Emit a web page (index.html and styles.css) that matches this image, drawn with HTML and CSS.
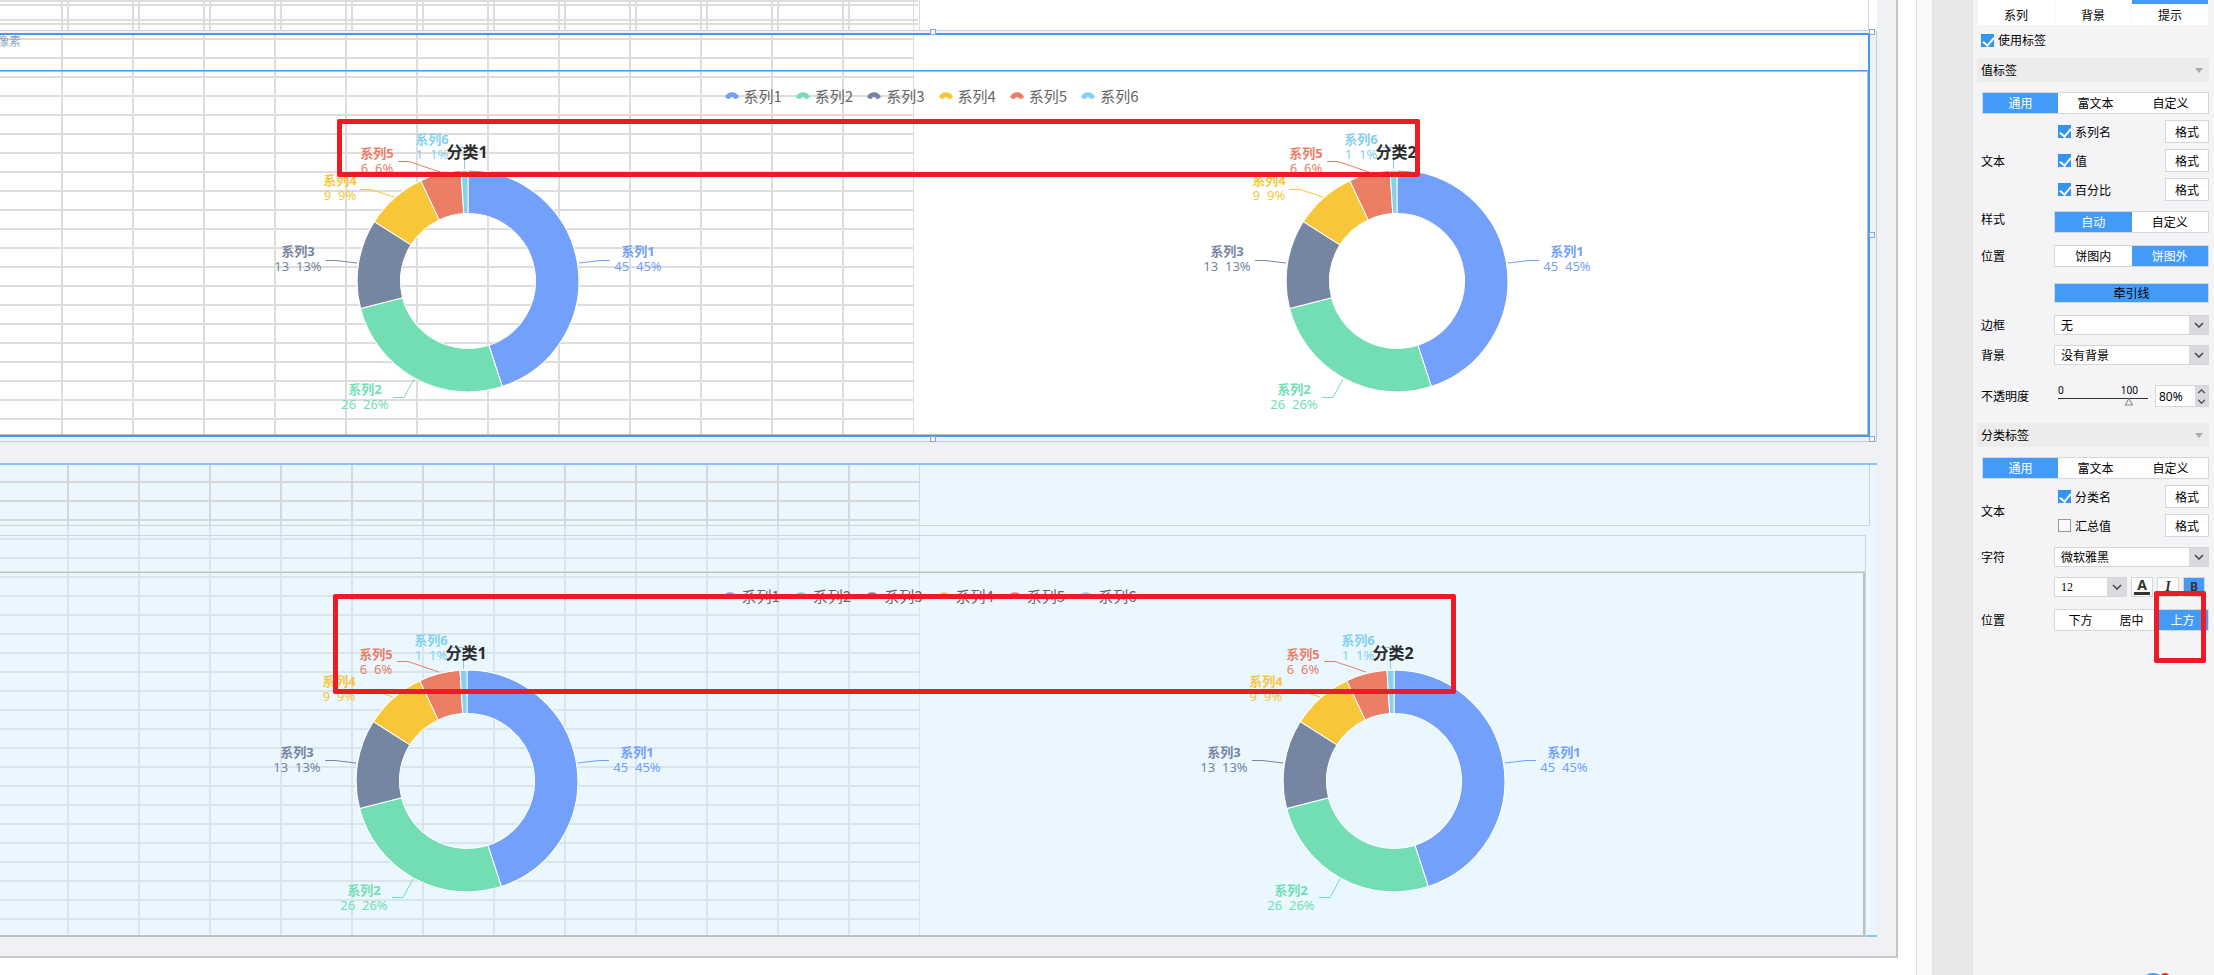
FILE: index.html
```html
<!DOCTYPE html>
<html lang="zh-CN">
<head>
<meta charset="utf-8">
<title>图表设计器</title>
<link rel="stylesheet" href="styles.css">
</head>
<body>
<svg class="defs" aria-hidden="true">
  <symbol id="donut" viewBox="-210 -160 420 300" overflow="visible">
    <g stroke="#fff" stroke-width="1" stroke-linejoin="round" transform="scale(1.008)">
      <path fill="#73a0fa" d="M0-110A110 110 0 0 1 33.99 104.62L20.7 63.72A67 67 0 0 0 0-67Z"/>
      <path fill="#73deb3" d="M33.99 104.62A110 110 0 0 1-106.54 27.36L-64.9 16.66A67 67 0 0 0 20.7 63.72Z"/>
      <path fill="#7585a2" d="M-106.54 27.36A110 110 0 0 1-92.88-58.94L-56.57-35.9A67 67 0 0 0-64.9 16.66Z"/>
      <path fill="#f7c739" d="M-92.88-58.94A110 110 0 0 1-46.84-99.53L-28.53-60.62A67 67 0 0 0-56.57-35.9Z"/>
      <path fill="#eb7e65" d="M-46.84-99.53A110 110 0 0 1-6.91-109.78L-4.21-66.87A67 67 0 0 0-28.53-60.62Z"/>
      <path fill="#83d0ef" d="M-6.91-109.78A110 110 0 0 1 0-110L0-67A67 67 0 0 0-4.21-66.87Z"/>
    </g>
    <g fill="none" stroke-width="1">
      <path stroke="#73a0fa" d="M111-18L132-20.5H142"/>
      <path stroke="#73deb3" d="M-54 98L-64 116.500H-75"/>
      <path stroke="#7585a2" d="M-111-18L-132-20.500H-142"/>
      <path stroke="#f7c739" d="M-74-84L-97-91.500H-108"/>
      <path stroke="#eb7e65" d="M-28-109L-59-119.500H-70"/>
      <path stroke="#83d0ef" d="M-3.500-112V-133.500H-14"/>
    </g>
  </symbol>
  <symbol id="arc" viewBox="0 0 14 8"><path fill="currentColor" d="M0 5C2-1.500 12-1.500 14 5Q12 7.500 9.500 7L8.500 5.500Q7 4.500 5.500 5.500L4.500 7Q2 7.500 0 5Z"/></symbol>
  <symbol id="chev" viewBox="0 0 10 6"><path d="M1 1L5 5L9 1" fill="none" stroke="#444" stroke-width="1.500"/></symbol>
</svg>

<div class="app">
  <main class="workspace">
    <div class="board">
      <section class="strip"></section>

      <section class="selection">
        <article class="chart-card selected">
          <header class="card-title">像素</header>
          <div class="card-body">
            <ul class="legend">
              <li class="s1"><svg><use href="#arc"/></svg><span>系列1</span></li>
              <li class="s2"><svg><use href="#arc"/></svg><span>系列2</span></li>
              <li class="s3"><svg><use href="#arc"/></svg><span>系列3</span></li>
              <li class="s4"><svg><use href="#arc"/></svg><span>系列4</span></li>
              <li class="s5"><svg><use href="#arc"/></svg><span>系列5</span></li>
              <li class="s6"><svg><use href="#arc"/></svg><span>系列6</span></li>
            </ul>
            <div class="pies">
              <svg class="pie" viewBox="-210 -160 420 300">
                <use href="#donut" x="-210" y="-160" width="420" height="300"/>
                <g class="s1"><text class="name" x="170" y="-25">系列1</text><text x="170" y="-10">45&#160;&#160;45%</text></g>
                <g class="s2"><text class="name" x="-103" y="113">系列2</text><text x="-103" y="128">26&#160;&#160;26%</text></g>
                <g class="s3"><text class="name" x="-170" y="-25">系列3</text><text x="-170" y="-10">13&#160;&#160;13%</text></g>
                <g class="s4"><text class="name" x="-128" y="-96">系列4</text><text x="-128" y="-81">9&#160;&#160;9%</text></g>
                <g class="s5"><text class="name" x="-91" y="-123">系列5</text><text x="-91" y="-108">6&#160;&#160;6%</text></g>
                <g class="s6"><text class="name" x="-36" y="-137">系列6</text><text x="-36" y="-122">1&#160;&#160;1%</text></g>
                <text class="category" x="-1" y="-123">分类1</text>
              </svg>
              <svg class="pie" viewBox="-210 -160 420 300">
                <use href="#donut" x="-210" y="-160" width="420" height="300"/>
                <g class="s1"><text class="name" x="170" y="-25">系列1</text><text x="170" y="-10">45&#160;&#160;45%</text></g>
                <g class="s2"><text class="name" x="-103" y="113">系列2</text><text x="-103" y="128">26&#160;&#160;26%</text></g>
                <g class="s3"><text class="name" x="-170" y="-25">系列3</text><text x="-170" y="-10">13&#160;&#160;13%</text></g>
                <g class="s4"><text class="name" x="-128" y="-96">系列4</text><text x="-128" y="-81">9&#160;&#160;9%</text></g>
                <g class="s5"><text class="name" x="-91" y="-123">系列5</text><text x="-91" y="-108">6&#160;&#160;6%</text></g>
                <g class="s6"><text class="name" x="-36" y="-137">系列6</text><text x="-36" y="-122">1&#160;&#160;1%</text></g>
                <text class="category" x="-1" y="-123">分类2</text>
              </svg>
            </div>
          </div>
        </article>
        <i class="handle top mid"></i><i class="handle top end"></i>
        <i class="handle center end"></i>
        <i class="handle bottom mid"></i><i class="handle bottom end"></i>
      </section>

      <section class="block">
        <div class="block-head"></div>
        <article class="chart-card plain">
          <header class="card-title"></header>
          <div class="card-body">
            <ul class="legend">
              <li class="s1"><svg><use href="#arc"/></svg><span>系列1</span></li>
              <li class="s2"><svg><use href="#arc"/></svg><span>系列2</span></li>
              <li class="s3"><svg><use href="#arc"/></svg><span>系列3</span></li>
              <li class="s4"><svg><use href="#arc"/></svg><span>系列4</span></li>
              <li class="s5"><svg><use href="#arc"/></svg><span>系列5</span></li>
              <li class="s6"><svg><use href="#arc"/></svg><span>系列6</span></li>
            </ul>
            <div class="pies">
              <svg class="pie" viewBox="-210 -160 420 300">
                <use href="#donut" x="-210" y="-160" width="420" height="300"/>
                <g class="s1"><text class="name" x="170" y="-24">系列1</text><text x="170" y="-9">45&#160;&#160;45%</text></g>
                <g class="s2"><text class="name" x="-103" y="114">系列2</text><text x="-103" y="129">26&#160;&#160;26%</text></g>
                <g class="s3"><text class="name" x="-170" y="-24">系列3</text><text x="-170" y="-9">13&#160;&#160;13%</text></g>
                <g class="s4"><text class="name" x="-128" y="-95">系列4</text><text x="-128" y="-80">9&#160;&#160;9%</text></g>
                <g class="s5"><text class="name" x="-91" y="-122">系列5</text><text x="-91" y="-107">6&#160;&#160;6%</text></g>
                <g class="s6"><text class="name" x="-36" y="-136">系列6</text><text x="-36" y="-121">1&#160;&#160;1%</text></g>
                <text class="category" x="-1" y="-122">分类1</text>
              </svg>
              <svg class="pie" viewBox="-210 -160 420 300">
                <use href="#donut" x="-210" y="-160" width="420" height="300"/>
                <g class="s1"><text class="name" x="170" y="-24">系列1</text><text x="170" y="-9">45&#160;&#160;45%</text></g>
                <g class="s2"><text class="name" x="-103" y="114">系列2</text><text x="-103" y="129">26&#160;&#160;26%</text></g>
                <g class="s3"><text class="name" x="-170" y="-24">系列3</text><text x="-170" y="-9">13&#160;&#160;13%</text></g>
                <g class="s4"><text class="name" x="-128" y="-95">系列4</text><text x="-128" y="-80">9&#160;&#160;9%</text></g>
                <g class="s5"><text class="name" x="-91" y="-122">系列5</text><text x="-91" y="-107">6&#160;&#160;6%</text></g>
                <g class="s6"><text class="name" x="-36" y="-136">系列6</text><text x="-36" y="-121">1&#160;&#160;1%</text></g>
                <text class="category" x="-1" y="-122">分类2</text>
              </svg>
            </div>
          </div>
        </article>
      </section>
    </div>
    <div class="mark mark-upper"></div>
    <div class="mark mark-lower"></div>
  </main>

  <div class="ruler"></div>
  <div class="gutter"></div>

  <aside class="panel">
    <nav class="tabs">
      <button type="button">系列</button><button type="button">背景</button><button type="button" class="active">提示</button>
    </nav>
    <label class="check use-label"><input type="checkbox" checked><span>使用标签</span></label>

    <h2 class="section">值标签</h2>
    <div class="seg wide"><button type="button" class="on">通用</button><button type="button">富文本</button><button type="button">自定义</button></div>
    <div class="row texts">
      <span class="lab">文本</span>
      <div class="lines">
        <div class="line"><label class="check"><input type="checkbox" checked><span>系列名</span></label><button type="button" class="btn">格式</button></div>
        <div class="line"><label class="check"><input type="checkbox" checked><span>值</span></label><button type="button" class="btn">格式</button></div>
        <div class="line"><label class="check"><input type="checkbox" checked><span>百分比</span></label><button type="button" class="btn">格式</button></div>
      </div>
    </div>
    <div class="row gap-s raised"><span class="lab">样式</span><div class="seg"><button type="button" class="on">自动</button><button type="button">自定义</button></div></div>
    <div class="row gap-m"><span class="lab">位置</span><div class="seg"><button type="button">饼图内</button><button type="button" class="on">饼图外</button></div></div>
    <div class="row gap-l"><span class="lab"></span><button type="button" class="lead">牵引线</button></div>
    <div class="row gap-m"><label class="lab" for="frame">边框</label><div class="select"><select id="frame"><option>无</option></select><svg><use href="#chev"/></svg></div></div>
    <div class="row gap-s"><label class="lab" for="back">背景</label><div class="select"><select id="back"><option>没有背景</option></select><svg><use href="#chev"/></svg></div></div>
    <div class="row gap-x">
      <label class="lab" for="alpha">不透明度</label>
      <div class="slider"><div class="scale"><span>0</span><span>100</span></div><input id="alpha" type="range" min="0" max="100" value="82"></div>
      <div class="spin">
        <input type="text" value="80%" aria-label="不透明度数值">
        <div class="steps">
          <button type="button" aria-label="增加"><svg class="up"><use href="#chev"/></svg></button>
          <button type="button" aria-label="减少"><svg><use href="#chev"/></svg></button>
        </div>
      </div>
    </div>

    <h2 class="section second">分类标签</h2>
    <div class="seg wide"><button type="button" class="on">通用</button><button type="button">富文本</button><button type="button">自定义</button></div>
    <div class="row texts">
      <span class="lab">文本</span>
      <div class="lines">
        <div class="line"><label class="check"><input type="checkbox" checked><span>分类名</span></label><button type="button" class="btn">格式</button></div>
        <div class="line"><label class="check"><input type="checkbox"><span>汇总值</span></label><button type="button" class="btn">格式</button></div>
      </div>
    </div>
    <div class="row gap-s"><label class="lab" for="font">字符</label><div class="select"><select id="font"><option>微软雅黑</option></select><svg><use href="#chev"/></svg></div></div>
    <div class="row gap-s">
      <span class="lab"></span>
      <div class="fonts">
        <div class="select size"><select aria-label="字号"><option>12</option></select><svg><use href="#chev"/></svg></div>
        <button type="button" class="fmt color">A</button>
        <button type="button" class="fmt italic">I</button>
        <button type="button" class="fmt bold">B</button>
      </div>
    </div>
    <div class="row gap-m"><span class="lab">位置</span><div class="seg"><button type="button">下方</button><button type="button">居中</button><button type="button" class="on">上方</button></div></div>
    <div class="mark mark-position"></div>
    <svg class="badge" viewBox="0 0 40 30"><circle cx="16" cy="14" r="13" fill="#4a9df5"/><circle cx="28" cy="6" r="5" fill="#e8312f"/></svg>
  </aside>
</div>
</body>
</html>
```

FILE: styles.css
```css
* { box-sizing: border-box; }

body {
  margin: 0;
  overflow: hidden;
  background: #fff;
  color: #000;
  font: 12px/16px "Noto Sans CJK SC", sans-serif;
}

button, input, select { margin: 0; padding: 0; font: inherit; color: inherit; border-radius: 0; }
.defs { position: absolute; width: 0; height: 0; }
.app { display: flex; min-height: 100vh; }
.workspace { position: relative; flex: 1; min-width: 0; }

/* canvas */
.board {
  margin-right: 18px;
  padding-bottom: 19px;
  background: #f0f1f5;
  border-right: 2px solid #c3c3c3;
  border-bottom: 2px solid #c8cacc;
}

.strip {
  height: 31px;
  margin-right: 27px;
  border-right: 1px solid #cfd0d1;
  border-bottom: 1px solid #cfd3d8;
  box-shadow: 8px 0 #fff;
  background:
    repeating-linear-gradient(90deg, #0000 0 61px, #ddd 61px 63px, #0000 63px 71px) 0 0 / 914px 100% no-repeat,
    repeating-linear-gradient(90deg, #0000 0 67px, #ddd 67px 69px, #0000 69px 71px) 0 0 / 920px 100% no-repeat,
    linear-gradient(#ddd 0 2px, #0000 2px 4px, #ddd 4px 6px, #0000 6px 19px, #ddd 19px 21px, #0000 21px 23px, #ddd 23px 25px, #0000 25px) 0 0 / 918px 100% no-repeat,
    #fff;
}

.selection {
  position: relative;
  margin-right: 19px;
  padding: 2px 6px 4px 0;
  border-right: 1px solid #c9ccd0;
  border-bottom: 1px solid #c9ccd0;
  background: #eef3fa;
}

.chart-card.selected {
  border: 2px solid #439af8;
  border-left: 0;
  background:
    repeating-linear-gradient(90deg, #0000 0 61px, #ddd 61px 63px, #0000 63px 71px) 0 0 / 914px 100% no-repeat,
    repeating-linear-gradient(#0000 0 3px, #ddd 3px 5px, #0000 5px 19px) 0 0 / 914px 100% no-repeat,
    #fff;
}
.selected .card-title {
  height: 36px;
  border-bottom: 1px solid #439af8;
  color: #8ba9c5;
  line-height: 12px;
  text-indent: -3px;
}
.selected .card-body { height: 364px; padding: 13px 0 0; border: 1px solid #bdbdbd; border-left: 0; }

.handle { position: absolute; width: 6px; height: 6px; border: 1px solid #86a9c8; background: #f4f9fe; }
.handle.top { top: -2px; }
.handle.center { top: calc(50% - 4px); }
.handle.bottom { bottom: -1px; }
.handle.mid { left: calc(50% - 8px); }
.handle.end { right: 1px; }

.block {
  margin: 21px 19px 0 0;
  border-top: 2px solid #8cc1fb;
  border-bottom: 2px solid #8cc1fb;
  background:
    repeating-linear-gradient(90deg, #0000 0 67px, #d9e5eb 67px 69px, #0000 69px 71px) 0 0 / 920px 100% no-repeat,
    repeating-linear-gradient(#0000 0 16px, #d9e5eb 16px 18px, #0000 18px 19px) 0 0 / 920px 100% no-repeat,
    #eaf7fe;
}
.block-head {
  height: 61px;
  margin-right: 7px;
  border-right: 1px solid #cdd3d6;
  border-bottom: 1px solid #cdd3d6;
  background:
    repeating-linear-gradient(90deg, #0000 0 67px, #d5d7da 67px 69px, #0000 69px 71px) 0 0 / 920px 100% no-repeat,
    repeating-linear-gradient(#0000 0 16px, #d5d7da 16px 18px, #0000 18px 19px) 0 0 / 920px 100% no-repeat;
}
.chart-card.plain { margin: 9px 11px -2px 0; border-top: 1px solid #cdd3d6; border-right: 1px solid #cdd3d6; }
.plain .card-title { height: 36px; border-bottom: 1px solid #d5dde1; }
.plain .card-body { height: 365px; padding: 12px 0 0; border: 2px solid #bcc1c3; border-width: 1px 2px 2px 0; }

.legend { display: flex; justify-content: center; gap: 14px; margin: 0; padding: 0 4px 0 0; list-style: none; }
.legend li { display: flex; align-items: center; gap: 5px; }
.legend svg { width: 14px; height: 8px; }
.legend span { color: #666; font: 15px/22px "Noto Sans CJK SC", sans-serif; }

.pies { display: grid; grid-template-columns: 1fr 1fr; justify-items: center; margin-top: 14px; padding: 0 6px 0 3px; }
.pie { width: 420px; height: 300px; overflow: visible; }
.pie text { fill: currentColor; font: 13px "Noto Sans", "Noto Sans CJK SC", sans-serif; text-anchor: middle; }
.pie .name { font-weight: 700; }
.pie .category { color: #2b2b2b; font-size: 16px; font-weight: 700; }

.s1 { color: #73a0fa; }
.s2 { color: #73deb3; }
.s3 { color: #7585a2; }
.s4 { color: #f7c739; }
.s5 { color: #eb7e65; }
.s6 { color: #83d0ef; }

/* review marks drawn over the canvas */
.mark { position: absolute; border: 5px solid #ed1c24; border-radius: 2px; pointer-events: none; }
.mark-upper { left: 337px; top: 119px; width: 1083px; height: 58px; }
.mark-lower { left: 333px; top: 594px; width: 1123px; height: 100px; }
.mark-position { right: 8px; top: 591px; width: 52px; height: 72px; }

.ruler { width: 17px; border: solid #e6e6d8; border-width: 0 1px; background: #f9f9f9; }
.gutter { width: 40px; background: #e8e8e8; }

/* property panel */
.panel { position: relative; width: 241px; padding: 0 5px 0 4px; background: #f4f4f7; overflow: hidden; }
.tabs { display: grid; grid-template-columns: repeat(3, 1fr); gap: 1px; padding: 0 1px; }
.tabs button { height: 25px; border: 0; border-top: 4px solid #fff; background: #fff; line-height: 14px; }
.tabs .active { border-top-color: #439bf8; }

.check { display: flex; align-items: center; gap: 4px; }
.check input {
  appearance: none;
  width: 13px;
  height: 13px;
  border: 1px solid #999;
  background: #f8f8f8;
}
.check input:checked { border: 0; background: #3294f0; }
.check input:checked::before {
  content: "";
  display: block;
  width: 9px;
  height: 5px;
  margin: 3px 2px;
  border: solid #fff;
  border-width: 0 0 2px 2px;
  transform: rotate(-50deg);
}
.use-label { height: 16px; margin: 7px 0 10px 4px; }

.section {
  display: flex;
  align-items: center;
  justify-content: space-between;
  height: 24px;
  margin: 0 0 10px;
  padding: 0 6px 0 4px;
  background: #ececec;
  font-size: 12px;
  font-weight: 400;
}
.section::after { content: ""; border: 4px solid #0000; border-top: 5px solid #aaa; border-bottom: 0; }
.section.second { margin-top: 16px; }

.seg { display: flex; flex: 1; height: 22px; border: 1px solid #d6d7db; background: #fff; }
.seg.wide { margin-left: 5px; }
.seg button { flex: 1; border: 0; background: none; line-height: 18px; }
.seg .on { background: #439bf8; color: #fff; }

.row { display: flex; align-items: center; padding-left: 4px; }
.row.raised { align-items: flex-start; }
.lab { width: 73px; flex: none; }
.texts { margin-top: 6px; }
.lines { display: grid; gap: 6px; flex: 1; padding-left: 4px; }
.line { display: flex; justify-content: space-between; align-items: center; }
.btn { width: 44px; height: 23px; border: 1px solid #d6d7db; background: #fff; line-height: 18px; }
.gap-s { margin-top: 10px; }
.gap-m { margin-top: 12px; }
.gap-l { margin-top: 16px; }
.gap-x { margin-top: 20px; }
.lead { flex: 1; height: 20px; border: 1px solid #d6d7db; background: #439bf8; line-height: 16px; }

.select { position: relative; flex: 1; height: 20px; }
.select select {
  appearance: none;
  width: 100%;
  height: 20px;
  padding: 0 20px 0 6px;
  border: 1px solid #d6d7db;
  background: linear-gradient(90deg, #0000 calc(100% - 19px), #d9dadd 0), #fff;
  line-height: 16px;
}
.select svg { position: absolute; right: 5px; top: 7px; width: 10px; height: 6px; pointer-events: none; }
.select.size { flex: none; width: 73px; font-family: "Liberation Serif", serif; }

.slider { width: 90px; margin: 0 7px 0 4px; }
.scale { display: flex; justify-content: space-between; padding-right: 10px; font: 10px/10px "Noto Sans", sans-serif; }
.slider input { appearance: none; display: block; width: 90px; height: 12px; background: linear-gradient(#333, #333) 0 3px / 100% 1px no-repeat; }
.slider input::-webkit-slider-thumb {
  appearance: none;
  width: 9px;
  height: 8px;
  margin-top: 1px;
  background: #888;
  clip-path: polygon(50% 0, 100% 100%, 0 100%, 50% 0, 50% 25%, 20% 86%, 80% 86%, 50% 25%);
}
.spin { display: flex; flex: 1; height: 22px; border: 1px solid #d6d7db; background: #fff; }
.spin input { width: 39px; padding-left: 3px; border: 0; background: none; font: 12px "Noto Sans", sans-serif; }
.steps { display: grid; flex: 1; background: #d9dadd; }
.steps button { display: grid; place-items: center; border: 0; background: none; }
.steps svg { width: 9px; height: 5px; }
.steps .up { transform: rotate(180deg); }

.fonts { display: flex; flex: 1; gap: 4px; }
.fmt { width: 22px; height: 20px; border: 1px solid #d6d7db; background: #fff; color: #333; font: 700 14px/14px "Noto Sans", sans-serif; }
.fmt.color { background: linear-gradient(#333, #333) center 14px / 16px 3px no-repeat, #fff; padding-bottom: 4px; }
.fmt.italic { font: italic 700 14px/16px "Liberation Serif", serif; }
.fmt.bold { background: #439bf8; font-size: 12px; }

.badge { position: absolute; left: 164px; top: 972px; width: 40px; height: 30px; }
```
